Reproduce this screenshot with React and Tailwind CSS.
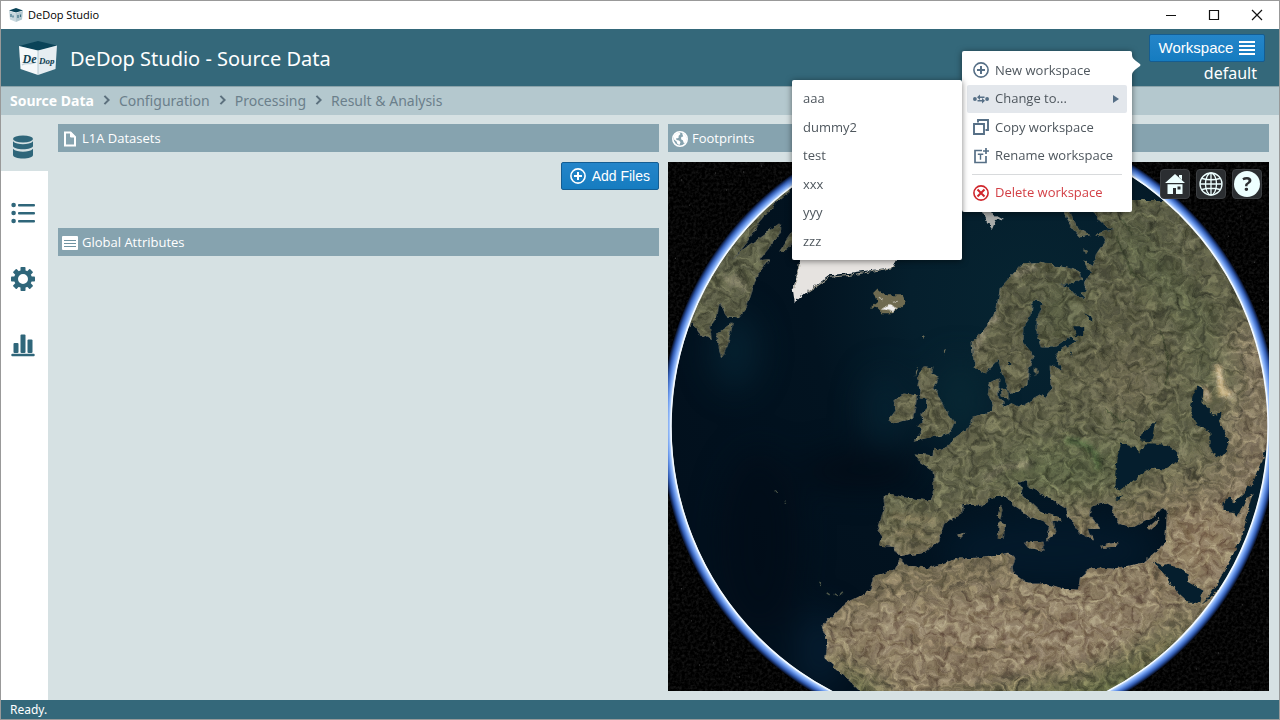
import React from "react";

const TABS = [
  { label: "Source data", icon: DatabaseIcon, active: true },
  { label: "Configuration", icon: ListIcon },
  { label: "Processing", icon: CogIcon },
  { label: "Result & Analysis", icon: ChartIcon },
];

const CRUMBS = ["Configuration", "Processing", "Result & Analysis"];
const WORKSPACES = ["aaa", "dummy2", "test", "xxx", "yyy", "zzz"];

function DatabaseIcon() {
  return (
    <svg viewBox="0 0 24 24" className="size-6" fill="currentColor" aria-hidden="true">
      <ellipse cx="12" cy="4" rx="10" ry="3.4" />
      <path d="M2 6.2c2 2.3 6 3 10 3s8-.7 10-3V11c0 1.800-4.500 3.200-10 3.200S2 12.800 2 11z" />
      <path d="M2 13.800c2 2.300 6 3 10 3s8-.7 10-3V20c0 2-4.500 3.500-10 3.500S2 22 2 20z" />
    </svg>
  );
}

function ListIcon() {
  return (
    <svg viewBox="0 0 24 24" className="size-6" fill="currentColor" aria-hidden="true">
      <circle cx="2.600" cy="4" r="2.300" />
      <circle cx="2.600" cy="12" r="2.300" />
      <circle cx="2.600" cy="20" r="2.300" />
      <rect x="7" y="3" width="17" height="2.400" rx="1" />
      <rect x="7" y="11" width="17" height="2.400" rx="1" />
      <rect x="7" y="19" width="17" height="2.400" rx="1" />
    </svg>
  );
}

function CogIcon() {
  const teeth = [0, 45, 90, 135, 180, 225, 270, 315];
  return (
    <svg viewBox="0 0 24 24" className="size-6" aria-hidden="true">
      <circle cx="12" cy="12" r="7" fill="none" stroke="currentColor" strokeWidth="4" />
      {teeth.map((a) => (
        <rect key={a} x="9.500" y="0" width="5" height="5" rx="0.800" fill="currentColor" transform={`rotate(${a} 12 12)`} />
      ))}
    </svg>
  );
}

function ChartIcon() {
  return (
    <svg viewBox="0 0 24 24" className="size-6" fill="currentColor" aria-hidden="true">
      <rect x="2.500" y="10" width="5" height="10" rx="1" />
      <rect x="9.500" y="1.500" width="5" height="18.500" rx="1" />
      <rect x="16.500" y="6.500" width="5" height="13.500" rx="1" />
      <rect x="0.300" y="20.800" width="23.400" height="2.500" rx="1" />
    </svg>
  );
}

function CircleIcon({ cross }) {
  return (
    <svg viewBox="0 0 16 16" className="size-4 shrink-0" fill="none" stroke="currentColor" strokeWidth="1.600" aria-hidden="true">
      <circle cx="8" cy="8" r="7.100" />
      {cross ? <path d="M4.500 4.500l7 7M11.500 4.500l-7 7" strokeWidth="2" /> : <path d="M8 4v8M4 8h8" strokeWidth="2" />}
    </svg>
  );
}

function SwapIcon() {
  return (
    <svg viewBox="0 0 16 16" className="size-4 shrink-0" fill="currentColor" aria-hidden="true">
      <circle cx="1.900" cy="8" r="1.900" />
      <circle cx="14.100" cy="8" r="1.900" />
      <path d="M4 6.300 7 3.600v2h4.500V7H7v2zM12 9.700 9 12.400v-2H4.500V9H9V7z" />
    </svg>
  );
}

function CopyIcon() {
  return (
    <svg viewBox="0 0 16 16" className="size-4 shrink-0" fill="none" stroke="currentColor" strokeWidth="1.900" aria-hidden="true">
      <path d="M1 5h10v10H1z" />
      <path d="M5 3.500V1h10v10h-2.500" />
    </svg>
  );
}

function RenameIcon() {
  return (
    <svg viewBox="0 0 16 16" className="size-4 shrink-0" fill="none" stroke="currentColor" aria-hidden="true">
      <path d="M9 2.500H2v12h11V8" strokeWidth="1.700" />
      <path d="M4.800 6.300h5.500M7.500 6.300v5.500" strokeWidth="1.400" />
      <path d="M13 0v6M10 3h6" strokeWidth="1.700" />
    </svg>
  );
}

function DocumentIcon() {
  return (
    <svg viewBox="0 0 16 16" className="size-4 shrink-0" fill="none" stroke="currentColor" strokeWidth="2" aria-hidden="true">
      <path d="M3 1.500h5.500L13 6v8.500H3z" />
      <path d="M8.500 1v5H13z" fill="currentColor" strokeWidth="1" />
    </svg>
  );
}

function TableIcon() {
  return (
    <svg viewBox="0 0 16 16" className="size-4 shrink-0" aria-hidden="true">
      <rect x="0" y="1" width="16" height="14" rx="1" fill="currentColor" />
      <path d="M2 5.500h12M2 8.500h12M2 11.500h12" stroke="#6f93a1" strokeWidth="1.200" />
    </svg>
  );
}

function EarthIcon() {
  return (
    <svg viewBox="0 0 16 16" className="size-4 shrink-0" aria-hidden="true">
      <circle cx="8" cy="8" r="7.200" fill="#86a3af" stroke="currentColor" strokeWidth="1.600" />
      <path d="M1.500 5.500 4 2.500l3.500-1 1 1.500L6.500 5l.3 1.500L5 7.500 4 7l.5 2L7 9.500 8.500 11 7.500 14 5.500 13 4.500 10.500 2 8.500zM10 2l3 1.500 2 4-1.200 3.500-1.800 1.500-1.200-3.200L9 8.300 9.300 6l1.900-.6z" fill="currentColor" />
    </svg>
  );
}

function Logo({ className }) {
  return (
    <svg viewBox="0 0 38 34" className={className} aria-hidden="true">
      <path d="M0 5 19 0l19 4.500L19 10z" fill="#0a4358" />
      <path d="M0 5l19 4.500V34L1.500 28z" fill="#f5f8fa" />
      <path d="M38 4.500 19 9.500V34l17.500-6z" fill="#e6edf1" />
      <path d="M19 9.500V34" stroke="#9fb8c2" strokeWidth="0.700" />
      <path d="M3 24c5-4 9 1 14-3M21 23c5-3 8 2 14-2" stroke="#c3d2d9" strokeWidth="1.500" fill="none" />
      <g fill="#123f52" fontFamily="'Liberation Serif', serif" fontStyle="italic" fontWeight="700">
        <text x="3.500" y="22" fontSize="12">De</text>
        <text x="20" y="23" fontSize="9">Dop</text>
      </g>
    </svg>
  );
}

function TitleIcon() {
  return (
    <svg viewBox="0 0 16 14" className="h-3.5 w-4" aria-hidden="true">
      <path d="M1 2.500 8 0l7 2.500L8 4.500z" fill="#0a4358" />
      <path d="M1 3l7 2v9l-6-2.500z" fill="#c9d8de" />
      <path d="M15 3 8 5v9l6-2.500z" fill="#b3c8d0" />
      <path d="M3 6v3M5 7.500v2M10 7v3M12.500 6.500V9" stroke="#3a6f84" strokeWidth="1.200" />
    </svg>
  );
}

function PanelHeader({ icon, children }) {
  return (
    <h2 className="flex h-7 items-center gap-1 bg-[#86a3af] px-1 pt-px font-['Open_Sans',sans-serif] text-[13px] text-white">
      {icon}
      {children}
    </h2>
  );
}

function MenuItem({ icon, children, danger, active, submenu }) {
  return (
    <li className="relative grid">
      <button
        type="button"
        aria-haspopup={submenu ? "menu" : undefined}
        className={`flex items-center gap-1.5 rounded-xs px-1.5 text-left ${active ? "bg-[#e3e7ec]" : ""} ${danger ? "text-[#d33f45]" : "text-[#4f575e]"}`}
      >
        <span className={danger ? "text-[#d0252b]" : "text-[#566f86]"}>{icon}</span>
        <span className="grow">{children}</span>
        {submenu && (
          <svg viewBox="0 0 6 8" className="mr-0.5 h-2 w-1.5" fill="#566f86" aria-hidden="true">
            <path d="M0 0l6 4-6 4z" />
          </svg>
        )}
      </button>
      {submenu}
    </li>
  );
}

function WorkspaceMenu() {
  return (
    <div className="absolute top-[22px] right-full mr-[17px] w-[170px] rounded-xs bg-white py-[5px] font-['Open_Sans',sans-serif] text-[13px] shadow-[0_1px_6px_rgba(0,0,0,0.5)]">
      <svg viewBox="0 0 10 20" className="absolute top-1 left-full h-5 w-2.5" fill="#fff" aria-hidden="true">
        <path d="M0 0c0 3 2 4 4 6l4 3q1 1 0 2l-4 3c-2 2-4 3-4 6z" />
      </svg>
      <ul className="grid h-[114px] grid-rows-4 px-[5px]">
        <MenuItem icon={<CircleIcon />}>New workspace</MenuItem>
        <MenuItem
          icon={<SwapIcon />}
          active
          submenu={
            <ul className="absolute -top-[5px] right-full mr-[5px] grid h-[180px] w-[170px] grid-rows-6 rounded-xs bg-white px-1 pt-[5px] pb-1 text-[#4f575e] shadow-[0_1px_6px_rgba(0,0,0,0.5)]">
              {WORKSPACES.map((name) => (
                <li key={name} className="grid">
                  <button type="button" className="px-[7px] text-left">{name}</button>
                </li>
              ))}
            </ul>
          }
        >
          Change to...
        </MenuItem>
        <MenuItem icon={<CopyIcon />}>Copy workspace</MenuItem>
        <MenuItem icon={<RenameIcon />}>Rename workspace</MenuItem>
      </ul>
      <hr className="mx-2.5 my-1 border-[#d8dadc]" />
      <ul className="grid h-7 px-[5px]">
        <MenuItem icon={<CircleIcon cross />} danger>Delete workspace</MenuItem>
      </ul>
    </div>
  );
}

const EURASIA =
  "M1092 200L1094 213 1100 222 1108 228 1114 229 1105 231 1095 234 1103 236 1106 241 1100 248 1096 254 1093 266 1088 263 1083 260 1087 267 1091 272 1087 277 1084 284 1087 290 1080 293 1085 298 1077 297 1068 287 1059 284 1073 284 1082 278 1080 272 1070 268 1053 265 1037 262 1023 263 1010 277 1000 288 997 307 990 323 977 337 972 343 973 355 975 367 985 373 995 363 998 358 1002 373 1008 387 1012 393 1018 392 1020 387 1027 385 1028 370 1033 355 1027 347 1022 340 1023 327 1031 315 1032 302 1038 300 1043 303 1037 320 1037 332 1041 347 1053 347 1070 337 1077 340 1060 350 1055 355 1060 365 1062 370 1050 364 1050 370 1052 387 1045 397 1040 395 1020 406 1013 402 1003 407 1003 400 998 397 999 377 990 382 988 393 993 405 990 412 973 417 970 427 955 437 950 445 937 450 934 447 933 455 915 453 921 462 933 470 934 480 933 493 931 500 906 497 890 493 884 497 885 507 878 528 882 537 880 545 894 546 900 556 925 552 933 545 939 540 945 523 963 512 963 503 981 505 995 495 1007 495 1013 505 1028 515 1046 522 1050 528 1046 540 1055 532 1052 520 1062 521 1060 517 1042 512 1023 495 1019 482 1026 479 1030 487 1050 498 1066 508 1068 515 1080 533 1094 540 1088 528 1100 528 1090 515 1092 505 1106 502 1113 506 1112 512 1120 523 1133 527 1155 515 1163 505 1167 510 1165 543 1153 553 1143 562 1113 568 1100 567 1090 568 1080 577 1078 589 1060 588 1044 583 1028 583 1013 573 1012 565 1015 558 1009 552 977 557 957 558 929 567 908 565 900 558 894 570 874 575 870 590 846 602 822 625 828 640 826 658 850 680 870 700 1150 740 1290 600 1290 200z";

const AMERICA =
  "M791 150L791 190 777 202 760 222 750 238 732 260 742 250 763 235 780 223 780 233 760 260 769 259 757 277 747 307 738 318 727 317 720 302 717 317 710 327 712 340 700 333 693 323 686 328 650 340 650 150zM733 322L718 333 720 350 722 358 728 345zM795 228L780 250 784 252 796 240z";

const ISLANDS =
  "M925 366L933 367 932 373 939 376 933 388 938 393 942 403 947 412 954 422 950 433 930 437 914 440 923 430 917 425 923 422 922 413 928 407 927 398 920 398 922 390 917 383 920 372zM903 393L917 395 913 418 893 423 889 420 897 410 893 402zM1001 388L1008 389 1008 398 1002 396zM1035 368L1038 370 1035 376zM1001 504L1003 509 1001 519 998 514zM999 521L1005 524 1003 537 998 538zM1024 542L1043 541 1044 550 1028 547zM1100 545L1117 542 1115 546 1102 547zM1147 528L1159 517 1155 525 1149 530zM957 534L965 532 961 537zM1062 208L1072 228 1080 237 1090 235 1076 226 1068 208zM1084 249L1088 251 1086 254z";

const INLAND_SEAS =
  "M1114 488L1116 460 1121 443 1135 447 1139 453 1145 443 1155 443 1167 445 1178 452 1177 461 1164 469 1150 468 1133 480 1120 490zM1140 440L1141 434 1155 421 1151 441zM1114 499L1123 493 1119 499zM1197 385L1203 388 1202 402 1217 418 1222 428 1228 442 1225 452 1215 457 1210 447 1210 433 1195 423 1190 410 1192 397zM1153 560L1162 565 1168 563 1187 573 1188 582 1202 590 1200 602 1188 602 1178 593 1167 577 1157 566zM1223 503L1228 495 1233 502 1243 493 1247 485 1251 486 1265 450 1275 450 1260 510 1235 570 1202 605 1220 577 1240 540 1253 493 1246 496 1237 517 1232 511 1223 510zM1216 413L1221 411 1220 419 1215 420zM1073 326L1083 326 1083 334 1076 336zM1084 313L1092 317 1092 322zM1069 350L1074 357 1070 353zM1008 361L1012 362 1008 366z";

const STARS = [
  [682, 180], [716, 173], [744, 172], [690, 205], [676, 258], [727, 190], [762, 166], [1240, 216], [1254, 262], [1228, 236],
  [1262, 300], [692, 620], [714, 642], [728, 659], [740, 676], [682, 588], [700, 664], [1242, 604], [1256, 640], [1218, 652], [1196, 668], [1262, 570], [1230, 680], [675, 480],
];

function Globe() {
  return (
    <svg
      viewBox="668 162 601 528"
      preserveAspectRatio="xMidYMid slice"
      className="block min-h-0 w-full grow basis-0 bg-black"
      role="img"
      aria-label="Footprints globe"
    >
      <defs>
        <clipPath id="disc"><circle cx="969.500" cy="426" r="297.500" /></clipPath>
        <clipPath id="land"><path d={EURASIA + AMERICA + ISLANDS} /></clipPath>
        <radialGradient id="halo" gradientUnits="userSpaceOnUse" cx="969.500" cy="426" r="308">
          <stop offset="0.963" stopColor="#ffffff" />
          <stop offset="0.970" stopColor="#b9d6ff" />
          <stop offset="0.979" stopColor="#6d9bee" />
          <stop offset="0.989" stopColor="#2f58ad" />
          <stop offset="1" stopColor="#020615" />
        </radialGradient>
        <radialGradient id="ocean" gradientUnits="userSpaceOnUse" cx="1030" cy="300" r="400">
          <stop offset="0" stopColor="#062431" />
          <stop offset="0.300" stopColor="#051f2d" />
          <stop offset="0.550" stopColor="#021320" />
          <stop offset="1" stopColor="#02101d" />
        </radialGradient>
        <linearGradient id="ground" gradientUnits="userSpaceOnUse" x1="980" y1="200" x2="1090" y2="690">
          <stop offset="0" stopColor="#5c5f48" />
          <stop offset="0.350" stopColor="#62624a" />
          <stop offset="0.550" stopColor="#66684e" />
          <stop offset="0.700" stopColor="#7b7158" />
          <stop offset="0.800" stopColor="#8f8067" />
          <stop offset="0.920" stopColor="#8a7b63" />
          <stop offset="1" stopColor="#666a48" />
        </linearGradient>
        <filter id="soft" x="-100%" y="-100%" width="300%" height="300%" colorInterpolationFilters="sRGB"><feGaussianBlur stdDeviation="16" /></filter>
        <filter id="smudge" x="-100%" y="-100%" width="300%" height="300%" colorInterpolationFilters="sRGB"><feGaussianBlur stdDeviation="2.500" /></filter>
        <filter id="terrain" filterUnits="userSpaceOnUse" x="660" y="150" width="620" height="560" colorInterpolationFilters="sRGB">
          <feTurbulence type="fractalNoise" baseFrequency="0.150" numOctaves="3" seed="4" result="warp" />
          <feDisplacementMap in="SourceGraphic" in2="warp" scale="5" xChannelSelector="R" yChannelSelector="G" result="shape" />
          <feTurbulence type="fractalNoise" baseFrequency="0.110 0.130" numOctaves="5" seed="23" result="fine" />
          <feTurbulence type="fractalNoise" baseFrequency="0.060" numOctaves="3" seed="7" result="coarse" />
          <feDisplacementMap in="fine" in2="coarse" scale="26" xChannelSelector="B" yChannelSelector="G" result="noise" />
          <feColorMatrix in="noise" type="matrix" values="0.520 0.150 0 0 0.150  0.500 0.150 0 0 0.160  0.520 0.100 0 0 0.170  0 0 0 0 1" result="grey" />
          <feComposite in="grey" in2="shape" operator="in" result="tex" />
          <feBlend in="tex" in2="shape" mode="overlay" />
        </filter>
        <filter id="coast" filterUnits="userSpaceOnUse" x="660" y="150" width="620" height="560" colorInterpolationFilters="sRGB">
          <feTurbulence type="fractalNoise" baseFrequency="0.150" numOctaves="3" seed="4" result="warp" />
          <feDisplacementMap in="SourceGraphic" in2="warp" scale="5" xChannelSelector="R" yChannelSelector="G" />
        </filter>
        <filter id="dust" filterUnits="userSpaceOnUse" x="660" y="150" width="620" height="560" colorInterpolationFilters="sRGB">
          <feTurbulence type="fractalNoise" baseFrequency="0.350" numOctaves="2" seed="2" />
          <feColorMatrix type="matrix" values="0.200 0 0 0 -0.080  0.200 0 0 0 -0.080  0.200 0 0 0 -0.080  0 0 0 0 1" />
        </filter>
      </defs>
      <rect x="400" y="0" width="1200" height="900" filter="url(#dust)" />
      {STARS.map(([x, y]) => (
        <circle key={`${x}-${y}`} cx={x} cy={y} r="0.700" fill="#3c3c3c" />
      ))}
      <circle cx="969.500" cy="426" r="308" fill="url(#halo)" />
      <g clipPath="url(#disc)">
        <rect x="660" y="110" width="620" height="640" fill="url(#ocean)" />
        <g filter="url(#soft)">
          <ellipse cx="885" cy="410" rx="22" ry="40" fill="#07293a" opacity="0.500" />
          <ellipse cx="960" cy="400" rx="24" ry="40" fill="#082733" />
          <ellipse cx="735" cy="350" rx="24" ry="40" fill="#07293a" opacity="0.600" />
          <ellipse cx="760" cy="540" rx="40" ry="90" fill="#010b17" opacity="0.700" />
          <ellipse cx="860" cy="470" rx="60" ry="18" fill="#010813" opacity="0.700" />
          <ellipse cx="1050" cy="550" rx="110" ry="36" fill="#03192a" />
          <ellipse cx="820" cy="650" rx="22" ry="40" fill="#07243c" opacity="0.600" />
        </g>
        <g filter="url(#terrain)">
          <g clipPath="url(#land)">
            <rect x="650" y="110" width="640" height="640" fill="url(#ground)" />
            <g filter="url(#soft)">
              <path d="M1205 330L1290 330 1290 600 1215 640 1165 570 1175 510 1230 480z" fill="#887b64" />
              <path d="M1165 500L1250 520 1215 600 1165 555z" fill="#958469" />
              <path d="M870 610L1180 610 1120 660 890 650z" fill="#94846c" />
              <path d="M820 655L900 705 850 710z" fill="#4d5f35" />
              <path d="M1230 590L1130 690 1080 700 1110 670z" fill="#5a653f" />
              <path d="M1120 230L1200 320 1230 400" fill="none" stroke="#586245" strokeWidth="22" />
              <ellipse cx="1070" cy="470" rx="70" ry="22" fill="#5e6748" />
              <ellipse cx="1130" cy="385" rx="30" ry="30" fill="#6d6951" />
              <ellipse cx="1060" cy="310" rx="30" ry="35" fill="#555a42" />
            </g>
            <g filter="url(#smudge)">
              <path d="M975 350L985 325 998 315M1013 275L1035 266" stroke="#9a927e" strokeWidth="5" fill="none" opacity="0.700" />
              <path d="M985 478L1005 466 1030 463" stroke="#989078" strokeWidth="6" fill="none" opacity="0.600" />
              <path d="M1217 365L1222 392 1232 395" stroke="#d8c39b" strokeWidth="8" fill="none" />
              <path d="M1203 386L1208 400" stroke="#bda98a" strokeWidth="6" />
              <path d="M1065 440C1085 440 1098 450 1098 468" stroke="#445c38" strokeWidth="5" fill="none" />
              <path d="M890 515L935 520M895 532L925 530" stroke="#857a5a" strokeWidth="5" opacity="0.700" />
              <path d="M735 275L745 290M725 275L735 285" stroke="#85816b" strokeWidth="4" />
              <path d="M900 635L960 650 1040 645M920 605L940 615M1000 600L1060 620" stroke="#6d5d46" strokeWidth="5" fill="none" opacity="0.500" />
              <path d="M1165 640L1130 670M1145 585L1160 570 1158 600" stroke="#665940" strokeWidth="3" fill="none" opacity="0.700" />
            </g>
            <path d="M1115 236L1125 255 1130 270 1140 280M1160 330L1168 360 1166 385M1105 407L1118 420 1135 420M1120 218L1128 228 1131 236" stroke="#343f2a" strokeWidth="1.500" fill="none" opacity="0.700" />
          </g>
        </g>
        <g filter="url(#coast)">
          <path d={INLAND_SEAS} fill="#051e2d" />
          <path d="M803 250L793 288 795 302 807 292 830 275 847 273 893 267 903 250z" fill="#e6e3e0" />
          <path d="M800 262L794 288M808 292L830 277 850 275 895 267" stroke="#a39f90" strokeWidth="1" fill="none" />
          <path d="M873 292L877 288 885 295 903 295 905 303 893 313 882 313 877 308 871 307 877 302z" fill="#6e6a50" />
          <path d="M883 309L889 304 898 308 893 312zM879 297L884 300M893 301L898 300" fill="#eeeeee" stroke="#b9b6a8" />
          <path d="M978 205L1003 219 996 220 992 229 985 219z" fill="#a8aaa8" />
          <path d="M921 335L924 334 923 340zM944 350L946 348 944 355zM915 370L917 366 915 377z" fill="#6c6c58" />
          <path d="M819 582L821 585M827 592L830 594M834 593L838 595M840 595L843 592M774 490L778 492M785 500L787 503" stroke="#4d5648" strokeWidth="1.500" />
        </g>
      </g>
      <circle cx="969.500" cy="426" r="298" fill="none" stroke="#f4faff" strokeWidth="1.500" />
    </svg>
  );
}

function GlobeButton({ label, children }) {
  return (
    <button type="button" aria-label={label} className="grid size-[30px] place-items-center rounded-sm border border-[#3c3f42] bg-[#2b2e31] text-[#edffff]">
      {children}
    </button>
  );
}

export default function App() {
  return (
    <div className="flex min-h-screen flex-col border border-[#999999] bg-[#d6e1e3] font-['Noto_Sans','Open_Sans',sans-serif]">
      <div className="flex h-7 items-center bg-white pl-[7px] text-black">
        <TitleIcon />
        <span className="ml-1 grow font-['Open_Sans',sans-serif] text-[11px]">DeDop Studio</span>
        <div className="flex gap-[15px] pr-2">
          <button type="button" aria-label="Minimize" className="grid h-7 w-7 place-items-center">
            <svg viewBox="0 0 12 12" className="size-3" stroke="#111" aria-hidden="true"><path d="M1 6.500h10" /></svg>
          </button>
          <button type="button" aria-label="Maximize" className="grid h-7 w-7 place-items-center">
            <svg viewBox="0 0 12 12" className="size-3" stroke="#111" strokeWidth="1.200" fill="none" aria-hidden="true"><path d="M1.500 1.500h9v9h-9z" /></svg>
          </button>
          <button type="button" aria-label="Close" className="grid h-7 w-7 place-items-center">
            <svg viewBox="0 0 12 12" className="size-3" stroke="#111" strokeWidth="1.200" aria-hidden="true"><path d="M1 1l10 10M11 1 1 11" /></svg>
          </button>
        </div>
      </div>

      <header className="relative z-10 flex h-[58px] items-start border-b border-[#8ba3aa] bg-[#34687a] pr-[14px] pl-[18px] text-white">
        <Logo className="mt-3 h-[34px] w-[38px]" />
        <h1 className="ml-[13px] grow pt-[14px] text-xl leading-8">DeDop Studio - Source Data</h1>
        <div className="relative flex flex-col items-end pt-[5px]">
          <button type="button" className="flex h-7 w-[116px] items-center justify-center gap-1.5 rounded-xs border border-[#145d92] bg-linear-to-b from-[#2485c9] to-[#157cc0] font-['Liberation_Sans',sans-serif] text-[15px]">
            Workspace
            <svg viewBox="0 0 16 16" className="size-4" stroke="currentColor" strokeWidth="1.800" aria-hidden="true">
              <path d="M0 2h16M0 6h16M0 10h16M0 14h16" />
            </svg>
          </button>
          <span className="pr-2 text-base leading-[22px]">default</span>
          <WorkspaceMenu />
        </div>
      </header>

      <nav aria-label="Steps" className="flex h-7 items-center bg-[#b4c8ce] pb-0.5 pl-[9px] text-[14px] text-[#6b7f8b]">
        <a href="#source" className="font-bold text-white">Source Data</a>
        {CRUMBS.map((c) => (
          <React.Fragment key={c}>
            <svg viewBox="0 0 8 12" className="mx-2 h-2.5 w-[9px]" fill="none" stroke="#5c707d" strokeWidth="2.400" aria-hidden="true"><path d="M1.500 1l5 5-5 5" /></svg>
            <a href="#step">{c}</a>
          </React.Fragment>
        ))}
      </nav>

      <div className="flex grow">
        <aside className="flex w-[47px] flex-col gap-2.5 bg-white text-[#2f667a]">
          {TABS.map(({ label, icon: Icon, active }) => (
            <button key={label} type="button" aria-label={label} className={`flex h-14 items-center justify-center pt-[7px] pr-1 ${active ? "bg-[#d6e1e3]" : ""}`}>
              <Icon />
            </button>
          ))}
        </aside>
        <main className="grid grow grid-cols-2 gap-[9px] px-2.5 py-[9px]">
          <div className="flex flex-col">
            <section className="flex h-[104px] flex-col">
              <PanelHeader icon={<DocumentIcon />}>L1A Datasets</PanelHeader>
              <button type="button" className="mt-2.5 flex h-7 items-center gap-1.5 self-end rounded-xs border border-[#145d92] bg-linear-to-b from-[#2485c9] to-[#157cc0] px-2 font-['Liberation_Sans',sans-serif] text-sm text-white">
                <CircleIcon />
                Add Files
              </button>
            </section>
            <section>
              <PanelHeader icon={<TableIcon />}>Global Attributes</PanelHeader>
            </section>
          </div>
          <section className="flex flex-col">
            <PanelHeader icon={<EarthIcon />}>Footprints</PanelHeader>
            <div className="relative mt-2.5 flex grow flex-col">
              <Globe />
              <div className="absolute top-[7px] right-[7px] flex gap-1.5">
                <GlobeButton label="Home view">
                  <svg viewBox="0 0 20 20" className="size-5" fill="currentColor" aria-hidden="true">
                    <path d="M10 0l10 9H0zM14 1h3v5l-3-3z" />
                    <path fillRule="evenodd" d="M2.500 10.200h15V20H11v-6H8v6H2.500zM12.500 12.500v3h3v-3z" />
                  </svg>
                </GlobeButton>
                <GlobeButton label="Scene mode">
                  <svg viewBox="0 0 24 24" className="size-6" fill="none" stroke="currentColor" strokeWidth="1.300" aria-hidden="true">
                    <circle cx="12" cy="12" r="11" />
                    <ellipse cx="12" cy="12" rx="5.500" ry="11" />
                    <path d="M12 1v22M1 12h22M3 6.500q9 2.500 18 0M3 17.500q9-2.500 18 0" />
                  </svg>
                </GlobeButton>
                <GlobeButton label="Navigation help">
                  <span className="grid size-[26px] place-items-center rounded-full bg-[#edffff] text-xl leading-none font-bold text-[#2b2e31]">?</span>
                </GlobeButton>
              </div>
            </div>
          </section>
        </main>
      </div>

      <footer className="flex h-[19px] items-center bg-[#34687a] pl-[9px] text-xs text-white">Ready.</footer>
    </div>
  );
}
